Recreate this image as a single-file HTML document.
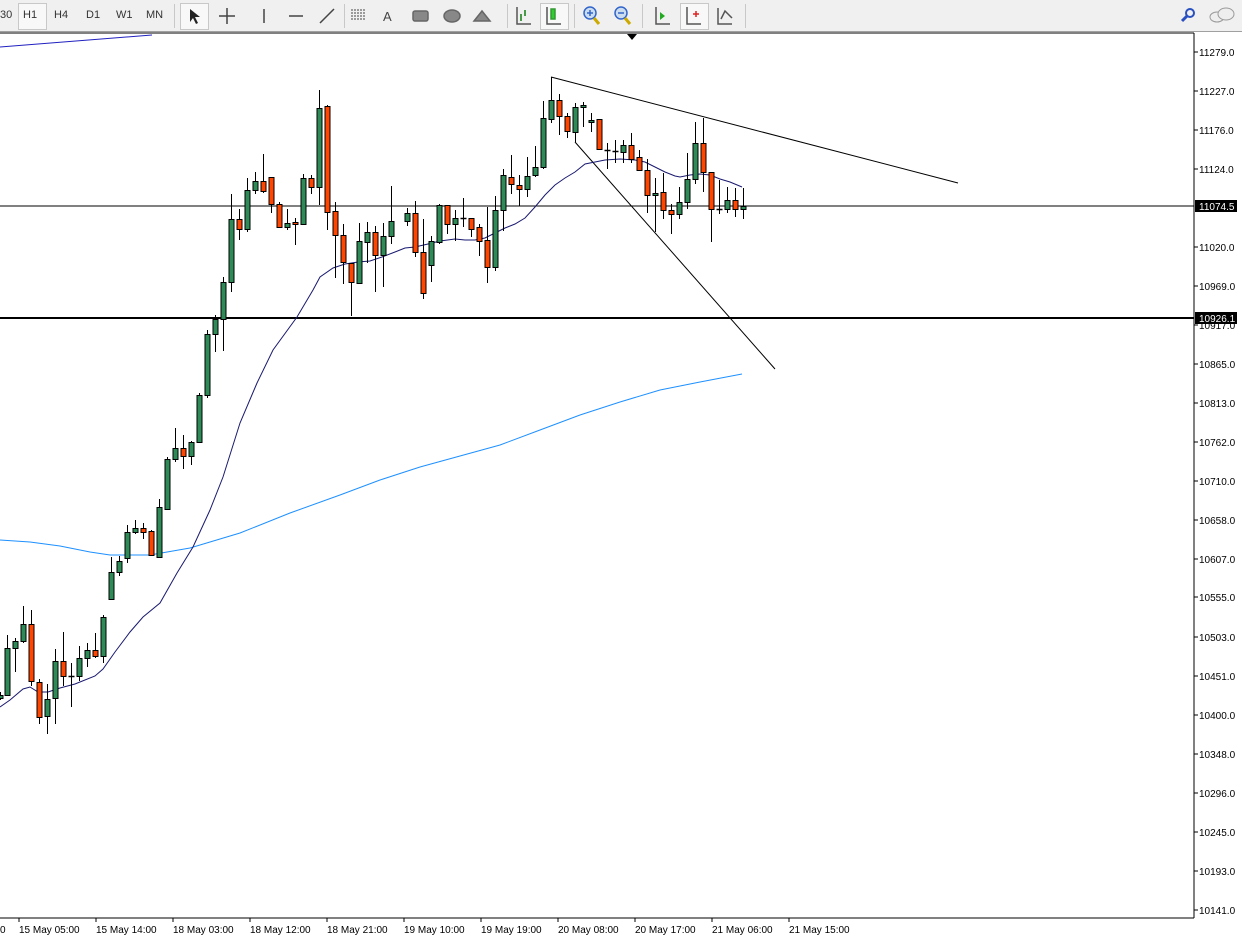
<!DOCTYPE html>
<html><head><meta charset="utf-8"><style>
body{margin:0;width:1242px;height:943px;background:#fff;overflow:hidden;font-family:"Liberation Sans",sans-serif;position:relative}
#tb{position:absolute;left:0;top:0;width:1242px;height:31px;background:#f0f0f0;border-bottom:1px solid #a0a0a0}
.t{position:absolute;top:9px;font-size:11px;color:#333}
.sep{position:absolute;top:4px;width:1px;height:24px;background:#c8c8c8}
.sel{position:absolute;top:3px;height:25px;border:1px solid #c8c8c8;background:#f8f8f8}
svg{position:absolute;left:0;top:0}
</style></head><body>
<div id="tb">
<div class="sel" style="left:18px;width:27px"></div>
<div class="t" style="left:0">30</div><div class="t" style="left:23px">H1</div><div class="t" style="left:54px">H4</div><div class="t" style="left:86px">D1</div><div class="t" style="left:116px">W1</div><div class="t" style="left:146px">MN</div>
<div class="sep" style="left:174px"></div>
<div class="sel" style="left:180px;width:27px"></div>
<div class="sep" style="left:344px"></div><div class="sep" style="left:507px"></div><div class="sep" style="left:574px"></div><div class="sep" style="left:642px"></div>
<div class="sel" style="left:540px;width:27px"></div><div class="sel" style="left:680px;width:27px"></div>
<div class="sep" style="left:745px"></div>
</div>
<svg width="1242" height="943" id="s">
<g stroke="#444" fill="none" stroke-width="1.5">
<path d="M190 9l0 13 3-4 3 6 2-1-3-6 5 0z" fill="#222" stroke="none"/>
<path d="M227 8v16M219 16h16"/>
<path d="M264 9v14"/><path d="M289 16h14"/><path d="M320 23l14-14"/>
<path d="M351 10h14M351 13h14M351 16h14M351 19h14" stroke-width="1" stroke-dasharray="2 1"/>
<text x="383" y="21" font-size="13" fill="#444" stroke="none">A</text>
<rect x="413" y="11" width="15" height="10" rx="2" fill="#888" stroke="#666"/>
<ellipse cx="452" cy="16" rx="8" ry="6" fill="#888" stroke="#666"/>
<path d="M474 21l8-10 8 10z" fill="#888" stroke="#666"/>
<path d="M517 7v17h14M521 14v7M525 10v6" stroke="#555"/><path d="M521 14v7M525 10v6" stroke="#2a9a2a"/>
<path d="M547 7v17h14" stroke="#555"/><rect x="551" y="9" width="4" height="10" fill="#3c3" stroke="#393"/>
<circle cx="590" cy="13" r="6" fill="#cde" stroke="#36c"/><path d="M594 18l5 6" stroke="#ca0" stroke-width="3"/><path d="M587 13h6M590 10v6" stroke="#36c"/>
<circle cx="621" cy="13" r="6" fill="#cde" stroke="#36c"/><path d="M625 18l5 6" stroke="#ca0" stroke-width="3"/><path d="M618 13h6" stroke="#36c"/>
<path d="M656 7v17h14M687 7v17h14M718 8v16h14" stroke="#555"/><path d="M660 12l5 4-5 4z" fill="#2a2" stroke="none"/>
<path d="M693 14h6M696 11v6" stroke="#d22"/><path d="M721 19l4-8 4 4 3 3" stroke="#555"/>
<circle cx="1190" cy="13" r="4" stroke="#2850c0" stroke-width="2"/><path d="M1187 16l-5 5" stroke="#2850c0" stroke-width="3"/>
<ellipse cx="1217" cy="17" rx="7" ry="5" fill="#eee" stroke="#999" stroke-width="1"/><ellipse cx="1226" cy="14" rx="8" ry="6" fill="#eee" stroke="#999" stroke-width="1"/>
</g>
<line x1="0" y1="33" x2="1194" y2="33" stroke="#000"/>
<line x1="1194" y1="33" x2="1194" y2="918" stroke="#000"/>
<line x1="0" y1="918" x2="1194" y2="918" stroke="#000"/>
<path d="M627 34h10l-5 6z" fill="#000"/>
<line x1="0" y1="206" x2="1194" y2="206" stroke="#000"/>
<line x1="0" y1="318" x2="1194" y2="318" stroke="#000" stroke-width="2"/>
<line x1="0" y1="47" x2="152" y2="35" stroke="#2020c0"/>
<line x1="551" y1="77" x2="958" y2="183" stroke="#000"/>
<line x1="575" y1="142" x2="775" y2="369" stroke="#000"/>
<polyline fill="none" stroke="#1e90ff" points="0,540 30,542 60,546 90,552 110,555 150,555 190,548 240,533 290,513 340,495 380,480 420,467 460,456 500,445 540,430 580,415 620,402 660,390 700,382 742,374"/>
<polyline fill="none" stroke="#191970" points="0,707 10,700 23,689 30,687 38,692 48,692 60,688 75,684 95,676 103,669 115,652 130,632 143,617 160,603 177,573 193,547 210,510 223,477 240,423 257,383 273,350 297,317 313,290 320,277 333,268 345,264 358,262 370,261 382,257 395,252 405,248 415,247 428,244 440,241 455,239 465,240 475,240 485,238 495,233 505,228 515,224 525,218 535,207 545,195 555,185 565,178 575,172 585,164 595,162 605,160 620,159 635,160 645,162 655,167 665,172 675,176 680,177 690,175 700,174 710,175 720,179 730,182 742,187"/>
<g id="c"></g>
<g font-size="10" fill="#000">
<text x="1199" y="56">11279.0</text><text x="1199" y="95">11227.0</text><text x="1199" y="134">11176.0</text><text x="1199" y="173">11124.0</text>
<text x="1199" y="251">11020.0</text><text x="1199" y="290">10969.0</text><text x="1199" y="329">10917.0</text>
<text x="1199" y="368">10865.0</text><text x="1199" y="407">10813.0</text><text x="1199" y="446">10762.0</text><text x="1199" y="485">10710.0</text><text x="1199" y="524">10658.0</text><text x="1199" y="563">10607.0</text><text x="1199" y="601">10555.0</text><text x="1199" y="641">10503.0</text><text x="1199" y="680">10451.0</text><text x="1199" y="719">10400.0</text><text x="1199" y="758">10348.0</text><text x="1199" y="797">10296.0</text><text x="1199" y="836">10245.0</text><text x="1199" y="875">10193.0</text><text x="1199" y="914">10141.0</text>
<rect x="1195" y="200" width="42" height="12" fill="#000"/><text x="1199" y="210" fill="#fff">11074.5</text>
<rect x="1195" y="312" width="42" height="12" fill="#000"/><text x="1199" y="322" fill="#fff">10926.1</text>
<text x="0" y="933">0</text>
<text x="19" y="933">15 May 05:00</text><text x="96" y="933">15 May 14:00</text><text x="173" y="933">18 May 03:00</text><text x="250" y="933">18 May 12:00</text><text x="327" y="933">18 May 21:00</text><text x="404" y="933">19 May 10:00</text><text x="481" y="933">19 May 19:00</text><text x="558" y="933">20 May 08:00</text><text x="635" y="933">20 May 17:00</text><text x="712" y="933">21 May 06:00</text><text x="789" y="933">21 May 15:00</text>
</g>
<g id="tk" stroke="#000"></g>
</svg>
<script>
var d=[[0,'g',695,698,692,700],[7,'g',648,695,635,696],[15,'g',641,648,638,672],[23,'g',624,641,606,643],[31,'r',624,681,610,686],[39,'r',682,717,679,724],[47,'g',699,716,684,734],[55,'g',661,698,649,724],[63,'r',661,676,632,686],[71,'d',676,676,663,707],[79,'g',658,676,646,681],[87,'g',650,658,643,667],[95,'r',650,656,633,658],[103,'g',617,656,615,663],[111,'g',572,599,557,599],[119,'g',561,572,556,576],[127,'g',532,558,525,563],[135,'g',528,532,520,534],[143,'r',528,532,523,539],[151,'r',531,555,530,556],[159,'g',507,557,499,557],[167,'g',459,509,457,509],[175,'g',448,459,428,462],[183,'r',448,456,435,469],[191,'g',442,456,441,465],[199,'g',395,442,393,442],[207,'g',334,395,330,398],[215,'g',319,334,315,352],[223,'g',282,319,277,351],[231,'g',219,282,194,292],[239,'r',219,229,209,240],[247,'g',190,229,178,232],[255,'g',181,190,172,194],[263,'r',181,191,154,193],[271,'r',177,204,177,213],[279,'r',204,227,202,228],[287,'g',223,227,209,230],[295,'r',222,224,218,245],[303,'g',178,224,174,224],[311,'r',178,187,175,194],[319,'g',108,187,90,205],[327,'r',106,212,105,230],[335,'r',211,235,202,278],[343,'r',235,262,224,284],[351,'r',263,282,263,316],[359,'g',241,283,223,283],[367,'g',232,242,222,263],[375,'r',232,255,226,292],[383,'g',236,255,223,287],[391,'g',221,236,186,244],[407,'g',213,221,208,226],[415,'r',213,252,201,257],[423,'r',252,293,219,299],[431,'g',241,265,236,282],[439,'g',205,242,204,244],[447,'r',205,224,205,234],[455,'g',218,224,210,241],[463,'d',218,218,198,227],[471,'r',218,229,218,237],[479,'r',227,241,224,256],[487,'r',240,267,207,283],[495,'g',210,267,196,271],[503,'g',175,210,169,231],[511,'r',177,184,155,194],[519,'r',185,189,175,206],[527,'g',176,189,157,197],[535,'g',167,175,146,177],[543,'g',118,167,101,169],[551,'g',100,119,77,123],[559,'r',100,116,94,135],[567,'r',116,131,113,138],[575,'g',107,132,103,142],[583,'g',105,107,102,127],[591,'g',120,122,113,132],[599,'r',119,149,119,149],[607,'d',150,150,143,169],[615,'d',151,151,140,163],[623,'g',145,152,140,163],[631,'r',145,159,133,163],[639,'r',157,170,150,171],[647,'r',170,195,159,213],[655,'g',193,195,178,232],[663,'r',192,210,173,219],[671,'r',210,214,204,234],[679,'g',202,214,187,219],[687,'g',179,202,153,209],[695,'g',143,179,122,184],[703,'r',143,172,118,192],[711,'r',172,209,172,242],[719,'d',209,209,180,214],[727,'g',200,209,187,213],[735,'r',200,209,188,217],[743,'g',206,209,188,219]];
var h='';d.forEach(function(c){var x=c[0]+0.5;h+='<line x1="'+x+'" x2="'+x+'" y1="'+c[4]+'" y2="'+c[5]+'" stroke="#000"/>';
if(c[1]=='d'){h+='<line x1="'+(x-3)+'" x2="'+(x+3)+'" y1="'+(c[2]+.5)+'" y2="'+(c[2]+.5)+'" stroke="#000" stroke-width="1.5"/>';}
else{var hh=Math.max(c[3]-c[2],2);h+='<rect x="'+(x-2.5)+'" y="'+(c[2]+.5)+'" width="5" height="'+hh+'" fill="'+(c[1]=='g'?'#2e8b57':'#ff4500')+'" stroke="#000"/>';}});
document.getElementById('c').innerHTML=h;
var t='';[52,91,130,169,247,286,325,364,403,442,481,520,559,597,637,676,715,754,793,832,871,910].forEach(function(y){t+='<line x1="1194" x2="1198" y1="'+y+'" y2="'+y+'"/>';});
[19,96,173,250,327,404,481,558,635,712,789].forEach(function(x){t+='<line x1="'+x+'" x2="'+x+'" y1="918" y2="922"/>';});
document.getElementById('tk').innerHTML=t;
</script>
</body></html>
